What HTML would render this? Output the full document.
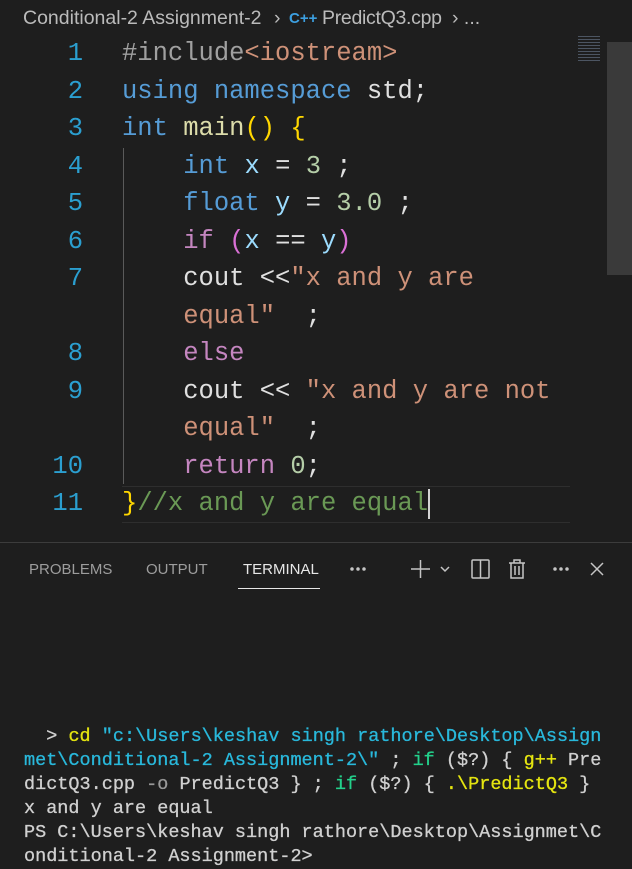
<!DOCTYPE html>
<html><head><style>
body{margin:0;width:632px;height:869px;background:#1e1e1e;overflow:hidden;position:relative;font-family:"Liberation Mono",monospace}
.bc{position:absolute;top:7px;font:19.5px "Liberation Sans",sans-serif;color:#bbbbbb;white-space:pre;letter-spacing:0px}
.code{position:absolute;left:0;top:35px}
.r{position:absolute;height:37.5px;line-height:37.5px;font-size:25.5px;white-space:pre;color:#e0e0e0}
.n{position:absolute;width:83px;text-align:right;height:37.5px;line-height:37.5px;font-size:25.5px;color:#2b9fd0}
.k{color:#569cd6}.f{color:#dcdcaa}.v{color:#9cdcfe}.m{color:#b5cea8}.s{color:#ce9178}.p{color:#c586c0}.y{color:#ffd700}.pb{color:#da70d6}.c{color:#6a9955}.g{color:#a0a0a0}
.term{position:absolute;left:24px;top:725px;font-size:18.5px;line-height:24px;color:#d0d0d0;white-space:pre;-webkit-text-stroke:0.3px}
.tab{position:absolute;top:561px;font:15px "Liberation Sans",sans-serif;color:#9d9d9d}
</style></head><body>
<div class="bc" style="left:23px">Conditional-2 Assignment-2</div>
<div class="bc" style="left:274px">›</div>
<div class="bc" style="left:289px;color:#3c9fe0;font-weight:bold;font-size:15px;top:10px">C++</div>
<div class="bc" style="left:322px;letter-spacing:-0.3px">PredictQ3.cpp</div>
<div class="bc" style="left:452px">› ...</div>
<div style="position:absolute;left:607px;top:42px;width:25px;height:233px;background:#3a3a3a"></div>
<div style="position:absolute;left:578px;top:36px;width:22px;height:26px;background:repeating-linear-gradient(#6a7a90 0 1px,transparent 1px 3px);opacity:.6"></div>
<div style="position:absolute;left:123px;top:148px;width:1px;height:336px;background:#5a5a5a"></div>
<div style="position:absolute;left:122px;top:486px;width:448px;height:35px;border-top:1px solid #2e2e2e;border-bottom:1px solid #2e2e2e"></div>
<div class="code">
<div class="n" style="top:0">1</div><div class="r" style="left:122px;top:0"><span class="g">#include</span><span class="s">&lt;iostream&gt;</span></div>
<div class="n" style="top:37.5px">2</div><div class="r" style="left:122px;top:37.5px"><span class="k">using</span> <span class="k">namespace</span> std;</div>
<div class="n" style="top:75px">3</div><div class="r" style="left:122px;top:75px"><span class="k">int</span> <span class="f">main</span><span class="y">()</span> <span class="y">{</span></div>
<div class="n" style="top:112.5px">4</div><div class="r" style="left:122px;top:112.5px">    <span class="k">int</span> <span class="v">x</span> = <span class="m">3</span> ;</div>
<div class="n" style="top:150px">5</div><div class="r" style="left:122px;top:150px">    <span class="k">float</span> <span class="v">y</span> = <span class="m">3.0</span> ;</div>
<div class="n" style="top:187.5px">6</div><div class="r" style="left:122px;top:187.5px">    <span class="p">if</span> <span class="pb">(</span><span class="v">x</span> == <span class="v">y</span><span class="pb">)</span></div>
<div class="n" style="top:225px">7</div><div class="r" style="left:122px;top:225px">    cout &lt;&lt;<span class="s">"x and y are</span></div>
<div class="r" style="left:122px;top:262.5px">    <span class="s">equal"</span>  ;</div>
<div class="n" style="top:300px">8</div><div class="r" style="left:122px;top:300px">    <span class="p">else</span></div>
<div class="n" style="top:337.5px">9</div><div class="r" style="left:122px;top:337.5px">    cout &lt;&lt; <span class="s">"x and y are not</span></div>
<div class="r" style="left:122px;top:375px">    <span class="s">equal"</span>  ;</div>
<div class="n" style="top:412.5px">10</div><div class="r" style="left:122px;top:412.5px">    <span class="p">return</span> <span class="m">0</span>;</div>
<div class="n" style="top:450px">11</div><div class="r" style="left:122px;top:450px"><span class="y">}</span><span class="c">//x and y are equal</span></div>
</div>
<div style="position:absolute;left:428px;top:489px;width:2px;height:30px;background:#d4d4d4"></div>
<div style="position:absolute;left:0;top:542px;width:632px;height:1px;background:#3c3c3c"></div>
<div class="tab" style="left:29px">PROBLEMS</div>
<div class="tab" style="left:146px">OUTPUT</div>
<div class="tab" style="left:243px;color:#e7e7e7">TERMINAL</div>
<div style="position:absolute;left:238px;top:588px;width:82px;height:1px;background:#e7e7e7"></div>
<svg style="position:absolute;left:345px;top:555px" width="280" height="28" fill="none" stroke="#c5c5c5" stroke-width="1.5">
<circle cx="7" cy="14" r="1" fill="#c5c5c5"/><circle cx="13" cy="14" r="1" fill="#c5c5c5"/><circle cx="19" cy="14" r="1" fill="#c5c5c5"/>
<g transform="translate(60,0)">
<path d="M6 14h19M15.5 5v18"/><path d="M36 12l4 4 4-4"/>
<rect x="67" y="5" width="17" height="18" rx="1"/><path d="M75.5 5v18"/>
<path d="M104 8h16M109 8V5h6v3M106 8v15h12V8M110 11v9M114 11v9"/>
<circle cx="150" cy="14" r="1" fill="#c5c5c5"/><circle cx="156" cy="14" r="1" fill="#c5c5c5"/><circle cx="162" cy="14" r="1" fill="#c5c5c5"/>
<path d="M186 8l12 12M198 8l-12 12"/></g>
</svg>
<div class="term">  <span>&gt;</span> <span style="color:#e5e510">cd</span> <span style="color:#29b8db">"c:\Users\keshav singh rathore\Desktop\Assign
met\Conditional-2 Assignment-2\"</span> ; <span style="color:#23d18b">if</span> ($?) { <span style="color:#e5e510">g++</span> Pre
dictQ3.cpp <span style="color:#999">-o</span> PredictQ3 } ; <span style="color:#23d18b">if</span> ($?) { <span style="color:#e5e510">.\PredictQ3</span> }
x and y are equal
PS C:\Users\keshav singh rathore\Desktop\Assignmet\C
onditional-2 Assignment-2&gt;</div>
</body></html>
